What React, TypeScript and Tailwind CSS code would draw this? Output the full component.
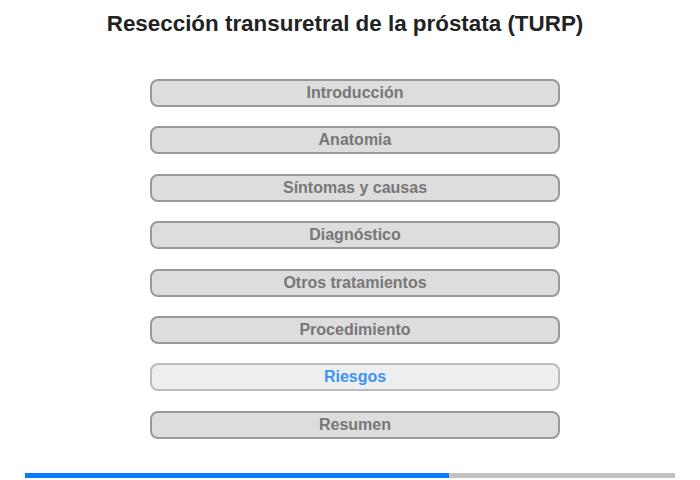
const sections = [
  'Introducción',
  'Anatomia',
  'Síntomas y causas',
  'Diagnóstico',
  'Otros tratamientos',
  'Procedimiento',
  'Riesgos',
  'Resumen',
]

const ACTIVE = 'Riesgos'

export default function App() {
  return (
    <div className="h-[480px] w-[700px] bg-white" style={{ fontFamily: '"Liberation Sans", Arial, sans-serif' }}>
      <h1 className="pt-[11px] pr-[10px] text-center text-[22.4px] font-bold leading-[26px] text-[#222]">
        Resección transuretral de la próstata (TURP)
      </h1>

      <div className="ml-[150px] mt-[42px] flex w-[410px] flex-col gap-[19.4px]">
        {sections.map((s) => {
          const active = s === ACTIVE
          return (
            <button
              key={s}
              className={
                active
                  ? 'flex h-[28px] items-center justify-center rounded-[8px] border-2 border-[#bbbbbb] bg-[#eeeeee] text-[16px] font-bold text-[#3c92f7]'
                  : 'flex h-[28px] items-center justify-center rounded-[8px] border-2 border-[#999999] bg-[#dddddd] text-[16px] font-bold text-[#777777]'
              }
            >
              {s}
            </button>
          )
        })}
      </div>

      <div className="ml-[25px] mt-[34px] flex h-[5px] w-[650px] bg-[#c2c2c2]">
        <div className="h-full w-[424px] bg-[#0a7cff]" />
      </div>
    </div>
  )
}
